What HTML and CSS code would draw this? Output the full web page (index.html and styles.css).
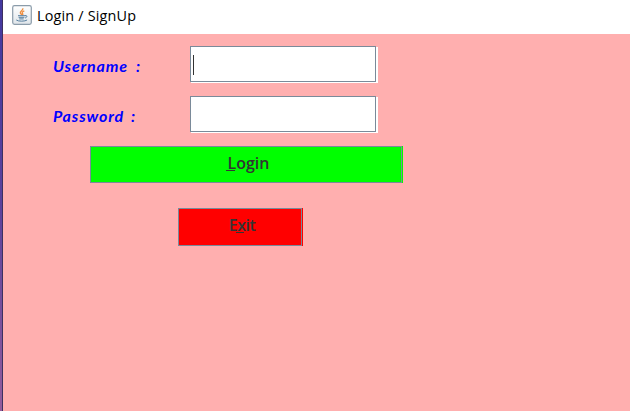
FILE: index.html
```html
<!DOCTYPE html>
<html lang="en">
<head>
<meta charset="utf-8">
<title>Login / SignUp</title>
<link rel="stylesheet" href="styles.css">
</head>
<body>
<div class="window">
  <header class="titlebar">
    <svg class="app-icon" width="20" height="20" viewBox="0 0 20 20" aria-hidden="true">
      <defs><linearGradient id="tile" x1="0" y1="0" x2="0" y2="1"><stop offset="0" stop-color="#fff"/><stop offset="1" stop-color="#dfe5ea"/></linearGradient></defs>
      <rect x=".7" y=".7" width="18.6" height="18.6" rx="1.8" fill="url(#tile)" stroke="#8b9caa" stroke-width="1.2"/>
      <path d="M10.8 3.2c.8 2-3 2.800-2.500 4.700.2.900 1.200 1.300 1.500 2.100M12.300 5.800c-1.900.9-2.700 1.700-1.700 2.800.5.600.3 1.100-.3 1.600" fill="none" stroke="#ee8c3c" stroke-width="1.300"/>
      <path d="M6 10.700h7.300M6.600 12.300h5.800M7.200 13.900h4.500M13 10.700c2.500-.7 2.600 1.600.1 2.300M4.300 15c1.800 1.600 9 1.500 10.800 0" fill="none" stroke="#547d9e" stroke-width="1"/>
    </svg>
    <span class="title">Login / SignUp</span>
  </header>
  <main class="form">
    <div class="row">
      <label class="label" for="user"><span class="user-word">Username</span><span>:</span></label>
      <div class="field" id="user"><span class="caret"></span></div>
    </div>
    <div class="row">
      <label class="label" for="pass"><span class="pass-word">Password</span><span>:</span></label>
      <div class="field" id="pass"></div>
    </div>
    <button class="button login"><span><span class="key key-l">L</span>ogin</span></button>
    <button class="button exit"><span>E<span class="key key-x">x</span>it</span></button>
  </main>
</div>
</body>
</html>
```
FILE: styles.css
```css
* { box-sizing: border-box; }
body {
  margin: 0;
  height: 411px;
  padding-left: 3px;
  overflow: hidden;
  background: linear-gradient(to right, transparent 2px, #3d3060 2px 3px, transparent 3px),
    linear-gradient(#4338a0, #5c429c 50%, #945c9c);
}
.window { height: 411px; background: #ffafaf; }
.titlebar {
  height: 34px;
  display: flex;
  align-items: flex-start;
  gap: 5px;
  padding: 5px 0 0 9px;
  background: #fff;
  color: #000;
}
.app-icon { flex: none; }
.title { padding-top: 1px; font: 14.4px/20px "Segoe UI", "Open Sans", sans-serif; letter-spacing: 0.18px; white-space: pre; }
.form { padding: 12px 0 0; }
.row { display: flex; height: 36px; margin-bottom: 14px; padding-left: 50px; }
.label {
  width: 137px;
  display: flex;
  gap: 8px;
  padding-top: 9px;
  color: #00f;
  font: italic bold 16px/22px "Comic Sans MS", Lato, sans-serif;
}
.user-word { width: 75px; letter-spacing: 0.85px; }
.pass-word { width: 70px; letter-spacing: 0.85px; }
.field {
  width: 186px;
  height: 36px;
  padding: 8px 2px;
  background: #fff;
  border: 1px solid #7a8a99;
  box-shadow: 1px 1px 0 #fff, 2px 1px 0 #fff;
}
.caret { display: block; width: 1px; height: 20px; background: #333; }
.button {
  display: flex;
  align-items: flex-start;
  justify-content: center;
  border: 1px solid #7a8a99;
  border-radius: 0;
  color: #333;
  font: 600 16px/22px "Segoe UI", "Open Sans", sans-serif;
}
.login {
  width: 312px;
  height: 37px;
  margin-left: 87px;
  padding: 5px 0 0 5px;
  background: #0f0;
  box-shadow: 1px 0 0 #0f0;
}
.exit {
  width: 124px;
  height: 38px;
  margin: 25px 0 0 175px;
  padding: 5px 0 0 4px;
  background: #f00;
  box-shadow: 1px 0 0 #f00;
  letter-spacing: -0.5px;
}
.key { position: relative; }
.key::after { content: ""; position: absolute; top: 18px; height: 1px; background: #333; }
.key-l::after { left: -2px; width: 9px; }
.key-x::after { left: -1px; width: 8px; }
```
